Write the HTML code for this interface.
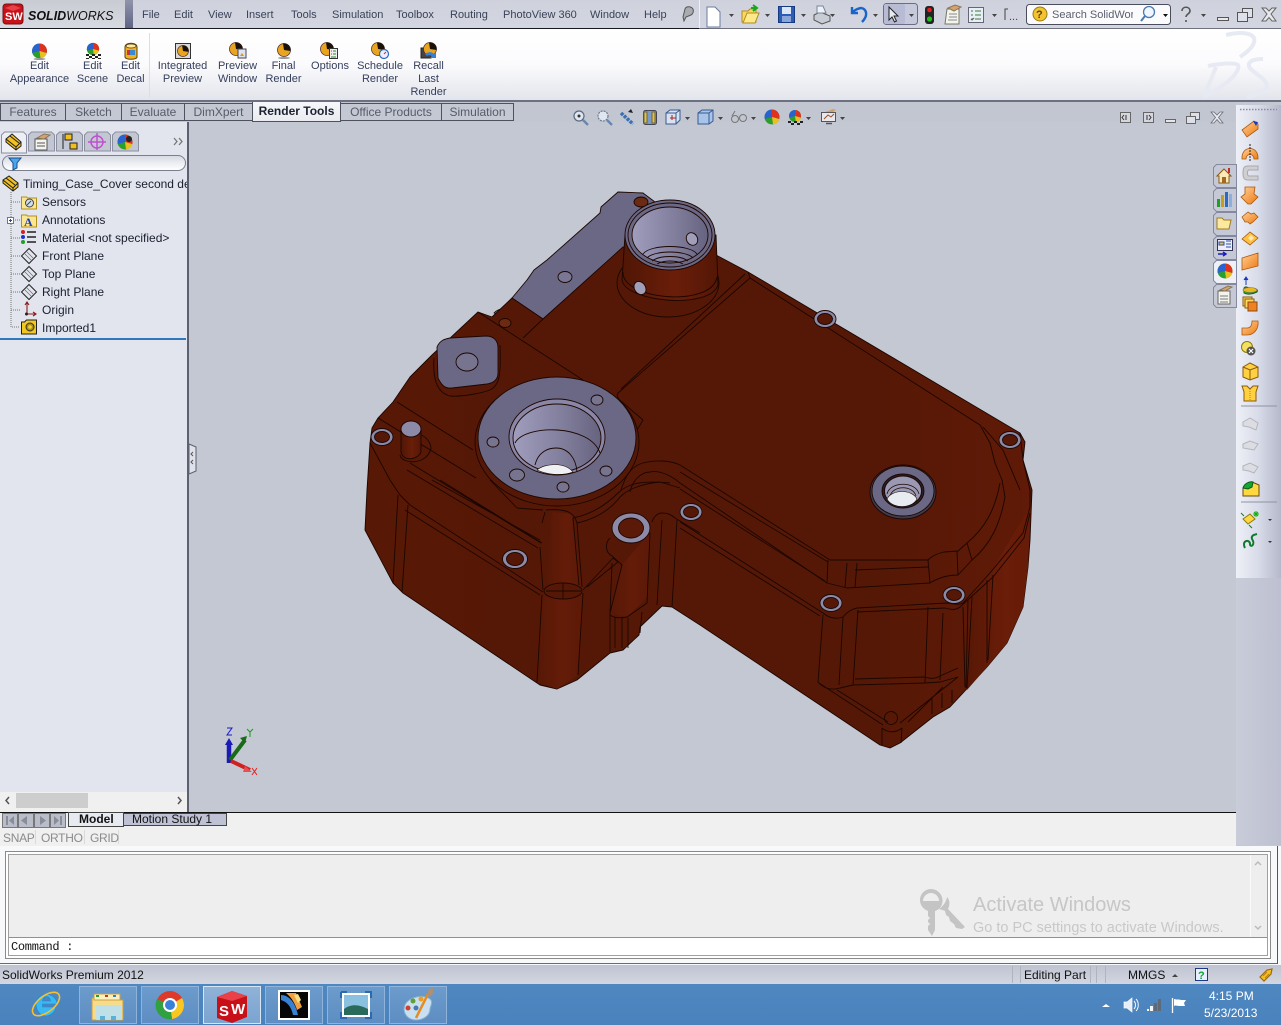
<!DOCTYPE html>
<html><head><meta charset="utf-8"><title>SolidWorks</title>
<style>
html,body{margin:0;padding:0;width:1281px;height:1025px;overflow:hidden;background:#c3c8d3;font-family:"Liberation Sans",sans-serif}
.a{position:absolute}
.t{position:absolute;white-space:nowrap;line-height:14px;font-size:11px;color:#3a4259}
.c{position:absolute;text-align:center;font-size:11px;line-height:13px;color:#353f5c;white-space:nowrap;transform:translateX(-50%)}
.tree{position:absolute;font-size:12px;line-height:16px;color:#1a1f2e;white-space:nowrap}
.tab{position:absolute;top:103px;height:18px;background:#c4c8d3;border:1px solid #4d5160;box-sizing:border-box;font-size:12px;line-height:16px;text-align:center;color:#565b6a}
.tb{position:absolute;top:986px;height:38px;width:58px;box-sizing:border-box;border:1px solid #8fb3d9;background:linear-gradient(#6c9bcc,#5d8dc2)}
</style></head><body>
<!-- base panels -->
<div class="a" style="left:0;top:0;width:1281px;height:28px;background:linear-gradient(#cfd2dd,#d3d6e0)"></div>
<div class="a" style="left:0;top:0;width:125px;height:28px;background:linear-gradient(#c9cbd3,#d8dae2)"></div>
<div class="a" style="left:125px;top:0;width:8px;height:28px;background:linear-gradient(#9094ab,#5f6486)"></div>
<div class="a" style="left:0;top:28px;width:699px;height:1px;background:#15181f"></div>
<div class="a" style="left:699px;top:28px;width:582px;height:1px;background:#6e7180"></div>
<div class="a" style="left:699px;top:0;width:1px;height:28px;background:#eef0f5"></div>
<div class="a" style="left:0;top:29px;width:1281px;height:71px;background:linear-gradient(#fff 0,#fbfbfd 50%,#e3e5ec 100%)"></div>
<div class="a" style="left:0;top:100px;width:1281px;height:2px;background:#6c7080"></div>
<div class="a" style="left:0;top:102px;width:1236px;height:22px;background:#c2c6d1"></div>
<div class="a" style="left:149px;top:33px;width:1px;height:64px;background:#dcdee5"></div>
<!-- viewport -->
<div class="a" style="left:189px;top:122px;width:1047px;height:690px;background:#c3c8d3"></div>
<!-- feature manager -->
<div class="a" style="left:0;top:122px;width:187px;height:690px;background:#e2e5ee"></div>
<div class="a" style="left:187px;top:122px;width:2px;height:690px;background:#5c6070"></div>
<div class="a" style="left:0;top:338px;width:186px;height:2px;background:#2d79bd"></div>
<div class="a" style="left:2px;top:155px;width:184px;height:16px;background:linear-gradient(#d8dbe4,#fff);border:1px solid #7a7f8e;border-radius:9px;box-sizing:border-box"></div>
<div class="a" style="left:0;top:792px;width:187px;height:20px;background:#f0f0f0"></div>
<div class="a" style="left:16px;top:793px;width:72px;height:15px;background:#cdcdcd"></div>
<!-- right panel -->
<div class="a" style="left:1236px;top:105px;width:45px;height:473px;background:linear-gradient(90deg,#eef0f8 0,#d8dbe8 50%,#b4b8ca 100%)"></div>
<div class="a" style="left:1236px;top:578px;width:45px;height:267px;background:linear-gradient(90deg,#c9ccd9,#bdc0d0)"></div>
<!-- bottom -->
<div class="a" style="left:0;top:812px;width:1236px;height:1px;background:#111"></div>
<div class="a" style="left:0;top:813px;width:1236px;height:33px;background:#f0f0f0"></div>
<div class="a" style="left:0;top:846px;width:1281px;height:119px;background:#f7f9fb"></div>
<div class="a" style="left:5px;top:851px;width:1266px;height:108px;box-sizing:border-box;border:1px solid #8a8a8a;background:#fff"></div>
<div class="a" style="left:8px;top:854px;width:1260px;height:102px;box-sizing:border-box;border:1px solid #a0a0a0;background:#eeeeee"></div>
<div class="a" style="left:9px;top:937px;width:1258px;height:18px;background:#fff;border-top:1px solid #909090;box-sizing:border-box"></div>
<div class="a" style="left:1250px;top:855px;width:1px;height:82px;background:#fafafa"></div>
<div class="a" style="left:0;top:963px;width:1278px;height:1px;background:#6a6a6a"></div>
<div class="a" style="left:1277px;top:846px;width:1px;height:118px;background:#555"></div>
<div class="a" style="left:0;top:965px;width:1281px;height:19px;background:linear-gradient(#bfc3d2,#d3d6e0)"></div>
<!-- taskbar -->
<div class="a" style="left:0;top:984px;width:1281px;height:41px;background:linear-gradient(#4f87c1,#4a82bd)"></div>
<div class="tb" style="left:79px"></div>
<div class="tb" style="left:141px"></div>
<div class="tb" style="left:203px;background:linear-gradient(#8fb2d8,#7ba4d0);border-color:#d6e5f4"></div>
<div class="tb" style="left:265px"></div>
<div class="tb" style="left:327px"></div>
<div class="tb" style="left:389px"></div>

<!-- tabs -->
<div class="tab" style="left:0;width:66px">Features</div>
<div class="tab" style="left:65px;width:57px">Sketch</div>
<div class="tab" style="left:121px;width:64px">Evaluate</div>
<div class="tab" style="left:184px;width:69px">DimXpert</div>
<div class="tab" style="left:252px;width:89px;top:102px;height:20px;background:linear-gradient(#f6f7fa,#e9ebf0);color:#1d2130;font-weight:bold;line-height:19px;border-top:none">Render Tools</div>
<div class="tab" style="left:340px;width:102px">Office Products</div>
<div class="tab" style="left:441px;width:73px">Simulation</div>

<!-- GRAPHICS -->
<svg class="a" style="left:0;top:0" width="1281" height="1025" viewBox="0 0 1281 1025" xmlns="http://www.w3.org/2000/svg">
<defs>
<linearGradient id="body" x1="0" x2="1" y1="0" y2="0"><stop offset="0" stop-color="#571806"/><stop offset=".75" stop-color="#551806"/><stop offset="1" stop-color="#601a07"/></linearGradient>
<linearGradient id="cyl" x1="0" x2="1"><stop offset="0" stop-color="#501605"/><stop offset=".55" stop-color="#6a1e09"/><stop offset="1" stop-color="#541706"/></linearGradient>
<linearGradient id="side" x1="0" x2="1"><stop offset="0" stop-color="#561806"/><stop offset=".55" stop-color="#641c08"/><stop offset="1" stop-color="#5c1907"/></linearGradient>
<linearGradient id="side2" x1="0" x2="1"><stop offset="0" stop-color="#571806"/><stop offset=".6" stop-color="#6a1d08"/><stop offset="1" stop-color="#661c08"/></linearGradient>
<linearGradient id="bore" x1="0" x2="1"><stop offset="0" stop-color="#a09dbd"/><stop offset=".6" stop-color="#7f7c9a"/><stop offset="1" stop-color="#66637f"/></linearGradient>
<linearGradient id="orng" x1="0" x2="1" y1="0" y2="1"><stop offset="0" stop-color="#ffd09a"/><stop offset="1" stop-color="#ee7a10"/></linearGradient>
<g id="pie"><circle cx="0" cy="0" r="7.5" fill="#2aa02a"/><path d="M0 0V-7.5A7.5 7.5 0 0 0-7.2 2Z" fill="#2a62d0"/><path d="M0 0V-7.5A7.500 7.500 0 0 1 7.200 2Z" fill="#e03020"/><path d="M0 0L7.200 2A7.500 7.500 0 0 1 1 7.400Z" fill="#eac020"/></g>
<g id="gball"><circle cx="0" cy="0" r="6.500" fill="#eaa520" stroke="#533" stroke-width=".8"/><path d="M-1-6.500A6.500 6.500 0 0 1 6.500 1L0 0Z" fill="#1a1208"/></g>
<g id="dn"><path d="M0 0h5l-2.500 3z" fill="#444"/></g>
<g id="plane"><path d="M-7.500 0L0-7.500 7.500 0 0 7.500Z" fill="none" stroke="#222"/><path d="M-3-5L5 3M-5-3L3 5" stroke="#666" stroke-width=".7"/></g>
<g id="dot"><path d="M0 0H9" stroke="#777" stroke-dasharray="1 1"/></g>
<g id="wash"><ellipse rx="11" ry="8.500" fill="#8d8aa8" stroke="#1a0a08" stroke-width=".9"/><ellipse rx="7.500" ry="5.500" fill="#561806" stroke="#1a0a08" stroke-width=".9"/></g>
</defs>

<!-- logo -->
<rect x="3" y="4" width="20" height="20" rx="3" fill="#c8121a" stroke="#7a0d12"/>
<path d="M5 8L13 5 21 8 13 11Z" fill="#e84048"/>
<text x="5" y="20" font-family="Liberation Sans" font-size="11" font-weight="bold" fill="#fff">SW</text>
<text x="28" y="20" font-family="Liberation Sans" font-size="12.500" font-style="italic" font-weight="bold" fill="#111">SOLID<tspan font-weight="normal">WORKS</tspan></text>

<!-- quick access toolbar -->
<path d="M683 17l2-8c1-3 6-3 8 0 1 2 0 5-2 6l-5 2-2 4z" fill="#a9abb0" stroke="#555"/>
<path d="M707 7h8l5 5v15h-13z" fill="#fff" stroke="#6a7da0"/>
<use href="#dn" x="729" y="14"/>
<path d="M742 11h6l2-2h6v13h-14z" fill="#f8d860" stroke="#b08a20"/><path d="M743 23l4-10h12l-4 10z" fill="#ffe98a" stroke="#b08a20"/><path d="M753 5l4 3-4 3M756 8h-5" stroke="#18a818" stroke-width="2" fill="none"/>
<use href="#dn" x="765" y="14"/>
<rect x="778.500" y="6.500" width="16" height="16" fill="#2c5cb8" stroke="#163a80"/><rect x="782" y="7" width="9" height="7" fill="#dde6f4"/><rect x="782" y="16" width="9" height="6" fill="#8aa6d8"/>
<use href="#dn" x="801" y="14"/>
<path d="M814 15l6-3 10 4v5l-8 3-8-4z" fill="#c8ccd4" stroke="#555"/><path d="M817 6h6l3 7h-9z" fill="#eef2f8" stroke="#789"/>
<use href="#dn" x="830" y="14"/>
<path d="M862 8c5 2 6 8 0 14M852 7v6h6M852 13c3-4 8-5 10-5" fill="none" stroke="#1a66c8" stroke-width="2.400"/>
<use href="#dn" x="873" y="14"/>
<rect x="883.500" y="3.500" width="34" height="21" rx="3" fill="#c6c9dc" stroke="#6a6d85"/><rect x="884" y="4" width="21" height="20" rx="2" fill="#b7bbd4"/><path d="M889 7v13l3-3 2.500 5 2-1-2.500-5h4z" fill="#e8ebf4" stroke="#222"/>
<use href="#dn" x="909" y="14"/>
<rect x="925" y="6" width="9" height="18" rx="3" fill="#222"/><circle cx="929.500" cy="10" r="2.300" fill="#e02020"/><circle cx="929.500" cy="19" r="2.600" fill="#20c020"/>
<path d="M947 9h12v15h-14z" fill="#f4f4ee" stroke="#776"/><path d="M948 8l7-3 6 2-7 4z" fill="#d8a070" stroke="#875"/><path d="M949 14h8M949 17h8M948 20h9" stroke="#888"/>
<rect x="968.500" y="7.500" width="15" height="15" fill="#e8eef6" stroke="#667"/><path d="M971 11h2M971 15h2M971 19l1 1 2-2M975 11h6M975 15h6M975 19h6" stroke="#3a7a3a"/>
<use href="#dn" x="992" y="14"/>
<path d="M1005 20V9h3" fill="none" stroke="#444"/><text x="1009" y="20" font-size="11" fill="#444" font-family="Liberation Sans">...</text>
<rect x="1026.500" y="4.500" width="144" height="20" rx="3" fill="#fbfbfd" stroke="#4a4d5c"/>
<circle cx="1040" cy="14" r="7" fill="#f3c430" stroke="#9a7a10"/><text x="1036" y="18" font-size="11" font-weight="bold" fill="#5a4010" font-family="Liberation Sans">?</text>
<circle cx="1149" cy="12" r="5.500" fill="#f0f6ff" stroke="#4a7ab0" stroke-width="1.300"/><path d="M1145 16l-4 5" stroke="#4a7ab0" stroke-width="2"/>
<path d="M1163 14h5l-2.500 3z" fill="#111"/>
<path d="M1182 11c0-5 8-5 8 0 0 3-4 3-4 6M1186 20v2" fill="none" stroke="#555" stroke-width="1.600"/>
<use href="#dn" x="1201" y="14"/>
<rect x="1217.500" y="17.500" width="11" height="3" fill="#e6e8ee" stroke="#555"/>
<rect x="1242.500" y="8.500" width="10" height="9" fill="#dfe1ea" stroke="#555"/><rect x="1237.500" y="12.500" width="10" height="9" fill="#dfe1ea" stroke="#555"/>
<path d="M1262 8h4l3 3 3-3h4l-5 6 5 7h-4l-3-3.500-3 3.500h-4l5-7z" fill="#e6e8ee" stroke="#666"/>
<!-- DS logo -->
<g fill="none" stroke="#e7eaf2" stroke-width="4"><path d="M1226 35c12-3 25-3 28 3 2 6-5 13-14 19"/><path d="M1204 97l12-30"/><path d="M1208 66c10-2 26-4 30-1 2 4-4 12-12 18-7 6-14 10-22 14"/><path d="M1263 59c-9 0-15 2-14 7 1 6 17 11 18 20 0 5-8 9-20 11"/></g>

<!-- ribbon icons -->
<use href="#pie" x="39.500" y="51"/><ellipse cx="39.500" cy="59" rx="6" ry="1" fill="#999"/>
<use href="#pie" transform="translate(93 49) scale(.82)"/>
<g fill="#222"><path d="M86 54h3v2h-3zM92 54h3v2h-3zM98 54h3v2h-3zM89 56h3v2h-3zM95 56h3v2h-3zM86 58h3v1h-3zM92 58h3v1h-3zM98 58h3v1h-3z"/></g>
<path d="M125 47c0-5 12-5 12 0v10c0 3-12 3-12 0z" fill="#f0b020" stroke="#5a4010"/><ellipse cx="131" cy="46" rx="5" ry="2" fill="#ffe9a0" stroke="#5a4010" stroke-width=".7"/><rect x="127" y="50" width="8" height="5" fill="#3a8ad0"/><rect x="127" y="50" width="3" height="5" fill="#d03030"/>
<rect x="175.500" y="43.500" width="15" height="15" fill="#dadada" stroke="#333"/><use href="#gball" transform="translate(183 51) scale(.85)"/>
<use href="#gball" x="236" y="49"/><rect x="238" y="49" width="8" height="9" fill="#dfe3ee" stroke="#445"/><path d="M240 56l2-3 2 3z" fill="#e09020"/>
<use href="#gball" x="284" y="50"/><ellipse cx="284" cy="58" rx="6" ry="1" fill="#999"/>
<use href="#gball" x="327" y="49" /><rect x="329.500" y="48.500" width="8" height="10" fill="#eee" stroke="#333"/><path d="M331 51h1M331 54h1M333 51h3M333 54h3M331 57h5" stroke="#2a8a2a"/>
<use href="#gball" x="378" y="49"/><circle cx="384" cy="54" r="4.500" fill="#eef" stroke="#2a6ac0" stroke-width="1.200"/><path d="M384 54l2-2" stroke="#c03030"/>
<rect x="421" y="48" width="10" height="10" fill="#444" stroke="#222"/><use href="#gball" x="430" y="49"/><path d="M425 54c4-3 7-2 9 0l2-2v6h-6l2-2c-2-1-4-1-5 0z" fill="#3a80d0"/>
<!-- heads up view toolbar -->
<circle cx="579" cy="116" r="5" fill="#dfe6f0" stroke="#5a6a80" stroke-width="1.200"/><circle cx="579" cy="116" r="1.500" fill="#333"/><path d="M583 120l5 5" stroke="#6a86b0" stroke-width="2.400"/>
<circle cx="603" cy="116" r="5" fill="#dfe6f0" stroke="#6a7a90" stroke-width="1.200" stroke-dasharray="2 1"/><path d="M607 120l5 5" stroke="#6a86b0" stroke-width="2.400"/>
<path d="M621 113l12 11" stroke="#3a70b0" stroke-width="3.500" stroke-dasharray="3 1"/><path d="M631 109l-3 3 5 1z" fill="#222"/>
<rect x="643.500" y="110.500" width="13" height="14" rx="2" fill="#7a9ac8" stroke="#445"/><path d="M644 112h3v11h-3zM652 112h3v11h-3z" fill="#e8c030" stroke="#665"/>
<path d="M666 113l4-3h10v10l-4 4h-10z" fill="#d8e2f2" stroke="#3a5a90"/><path d="M666 113h10v11M676 113l4-3" fill="none" stroke="#3a5a90"/><path d="M672 115v5M670 118h6" stroke="#b02020"/>
<use href="#dn" x="685" y="117"/>
<path d="M698 113l4-3h11v11l-4 3h-11z" fill="#a8c4e8" stroke="#3a5a90"/><path d="M698 113h11v11M709 113l4-3" fill="none" stroke="#3a5a90"/>
<use href="#dn" x="718" y="117"/>
<circle cx="735" cy="119" r="3.500" fill="none" stroke="#777"/><circle cx="743" cy="118" r="3.500" fill="none" stroke="#777"/><path d="M732 116l3-5" stroke="#777"/>
<use href="#dn" x="751" y="117"/>
<use href="#pie" x="772" y="117"/>
<use href="#pie" transform="translate(795 116) scale(.8)"/>
<g fill="#222"><path d="M788 121h3v2h-3zM794 121h3v2h-3zM800 121h3v2h-3zM791 123h3v2h-3zM797 123h3v2h-3z"/></g>
<use href="#dn" x="806" y="117"/>
<rect x="821.500" y="112.500" width="14" height="9" fill="#e8e8ee" stroke="#555"/><path d="M824 119l4-4 3 2 3-3" stroke="#a05020" fill="none"/><path d="M825 112l8-3 3 1-3 2z" fill="#d0a070"/><path d="M826 123.500h6" stroke="#555" stroke-width="1.500"/>
<use href="#dn" x="840" y="117"/>
<!-- viewport win controls -->
<rect x="1120.500" y="112.500" width="10" height="10" fill="#d4d7df" stroke="#666"/><path d="M1124 115l-2 2.500 2 2.500M1126 115v5" stroke="#333" fill="none"/>
<rect x="1143.500" y="112.500" width="10" height="10" fill="#d4d7df" stroke="#666"/><path d="M1149 115l2 2.500-2 2.500M1147 115v5" stroke="#333" fill="none"/>
<rect x="1165.500" y="119.500" width="10" height="3" fill="#e4e6ec" stroke="#666"/>
<rect x="1190.500" y="112.500" width="9" height="7" fill="#dde0e8" stroke="#666"/><rect x="1186.500" y="116.500" width="9" height="7" fill="#dde0e8" stroke="#666"/>
<path d="M1211 112h3l3 3 3-3h3l-4.500 5.500 4.500 5.500h-3l-3-3.500-3 3.500h-3l4.500-5.500z" fill="#e8eaef" stroke="#6a6d78" stroke-width=".8"/>

<!-- feature manager tabs -->
<g stroke="#8b8fa0" fill="#c3c7d3">
<path d="M1.500 153v-18l3-3h19l3 3v18z" fill="#edeff5"/>
<path d="M28.500 151v-16l3-3h20l3 3v16z"/>
<path d="M56.500 151v-16l3-3h20l3 3v16z"/>
<path d="M84.500 151v-16l3-3h20l3 3v16z"/>
<path d="M112.500 151v-16l3-3h20l3 3v16z"/></g>
<path d="M6 139l6-5 9 8v4l-5 4-10-8z" fill="#f2c020" stroke="#222"/><path d="M6 139l10 8v3M16 147l5-5M10 136l9 7" fill="none" stroke="#222"/>
<path d="M35 139h12v11h-12z" fill="#f4f4ee" stroke="#555"/><path d="M37 138l7-4 6 1-6 4z" fill="#d8a070" stroke="#875"/><path d="M37 143h8M37 146h8" stroke="#555"/>
<path d="M63 134v15" stroke="#222"/><rect x="65" y="134" width="7" height="6" fill="#f0c020" stroke="#222"/><rect x="70" y="143" width="7" height="6" fill="#f0c020" stroke="#222"/>
<circle cx="97" cy="142" r="6" fill="none" stroke="#c050d0" stroke-width="1.500"/><path d="M97 133v17M88 142h18" stroke="#c050d0" stroke-width="1.500"/>
<use href="#pie" x="125" y="142"/><circle cx="129" cy="139" r="3" fill="#222"/>
<path d="M174 138l3 3.500-3 3.500M179 138l3 3.500-3 3.500" fill="none" stroke="#777" stroke-width="1.300"/>
<path d="M9 158h12l-4 5v5l-4 2v-7z" fill="#4aa8e8" stroke="#1a4a90"/>
<!-- tree -->
<path d="M3 180l6-4 9 7v4l-5 4-10-8z" fill="#f2c020" stroke="#222"/><path d="M3 180l10 8v3M13 188l5-5M6 178l9 7" fill="none" stroke="#222"/>
<g><path d="M11 192V327H20" fill="none" stroke="#777" stroke-dasharray="1 1"/>
<use href="#dot" x="11" y="202"/><use href="#dot" x="15" y="220"/><use href="#dot" x="11" y="238"/><use href="#dot" x="11" y="256"/><use href="#dot" x="11" y="274"/><use href="#dot" x="11" y="292"/><use href="#dot" x="11" y="310"/></g>
<path d="M21.500 197h5l1 1h9v11h-15z" fill="#fbe690" stroke="#b09020"/><circle cx="29.500" cy="203" r="4" fill="#cfe0f4" stroke="#444"/><path d="M27 205l4-4" stroke="#444"/>
<rect x="7.500" y="217.500" width="6" height="6" fill="#fff" stroke="#777"/><path d="M9 220.500h3M10.500 219v3" stroke="#2a4a90"/>
<path d="M21.500 215h5l1 1h9v11h-15z" fill="#fbe690" stroke="#b09020"/><text x="24" y="226" font-family="Liberation Serif" font-size="12" font-weight="bold" fill="#1a3ac0">A</text>
<circle cx="23" cy="232" r="2" fill="#d02020"/><circle cx="23" cy="237" r="2" fill="#2030d0"/><circle cx="23" cy="242" r="2" fill="#20a020"/><path d="M27 232h9M27 237h9M27 242h9" stroke="#222" stroke-width="1.500"/>
<use href="#plane" x="29" y="256"/><use href="#plane" x="29" y="274"/><use href="#plane" x="29" y="292"/>
<path d="M27 303v11M27 314h8M25 305l2-3 2 3M33 312l3 2-3 2" fill="none" stroke="#8a1a1a" stroke-width="1.100"/><circle cx="26.500" cy="314" r="1.500" fill="#222"/>
<path d="M21.500 322h3l2-2h10v14h-15z" fill="#f0c820" stroke="#222"/><circle cx="30" cy="327" r="4" fill="#b09010" stroke="#332"/><circle cx="30" cy="327" r="1.800" fill="#f0d040"/>
<!-- collapse handle -->
<path d="M189 444l7 3v24l-7 3z" fill="#dfe2ea" stroke="#5c6070"/><path d="M193 452l-2 2 2 2M193 460l-2 2 2 2" stroke="#555" fill="none"/>
<path d="M9 797l-3 3.500 3 3.500M178 797l3 3.500-3 3.500" fill="none" stroke="#555" stroke-width="1.500"/>

<!-- task pane tabs -->
<g fill="#c5c9d6" stroke="#8589a0">
<path d="M1236.500 164.500h-20l-3 3v17l3 3h20z"/><path d="M1236.500 188.500h-20l-3 3v17l3 3h20z"/><path d="M1236.500 212.500h-20l-3 3v17l3 3h20z"/><path d="M1236.500 236.500h-20l-3 3v17l3 3h20z"/>
<path d="M1236.500 260.500h-20l-3 3v17l3 3h20z" fill="#eef0f6"/><path d="M1236.500 284.500h-20l-3 3v17l3 3h20z"/></g>
<path d="M1217 176l7-7 7 7h-2v7h-10v-7z" fill="#fbe9b8" stroke="#8a5a10"/><rect x="1222" y="177" width="4" height="6" fill="#a06a20"/><rect x="1228" y="168" width="2" height="5" fill="#c03020"/>
<rect x="1217" y="199" width="3" height="8" fill="#20a020"/><rect x="1221" y="195" width="3" height="12" fill="#c0a020"/><rect x="1225" y="192" width="3" height="15" fill="#2a6ac0"/><rect x="1229" y="194" width="3" height="13" fill="#8ab0e0"/>
<path d="M1217 218h5l2 2h7l-2 9h-12z" fill="#fbe9a0" stroke="#a07a20"/>
<rect x="1217.500" y="239.500" width="15" height="11" fill="#eef" stroke="#335"/><path d="M1219 242h5v3h-5zM1226 241h5M1226 244h5M1226 247h5" stroke="#2a50a0" fill="#e8c030"/><path d="M1218 254h7M1223 252l3 2-3 2" stroke="#1a1ac0" fill="none" stroke-width="1.400"/>
<use href="#pie" x="1225" y="271"/>
<path d="M1218 291h12v13h-12z" fill="#f4f4ee" stroke="#666"/><path d="M1220 290l8-4 4 1-7 4z" fill="#d8a070" stroke="#875"/><path d="M1220 296h8M1220 299h8M1220 302h8" stroke="#777"/>

<!-- right toolbar -->
<path d="M1240 109.500h37" stroke="#8a8da0" stroke-width="1.500" stroke-dasharray="1.500 1.500"/>
<g stroke="#a85a10" stroke-width=".8" fill="url(#orng)">
<path d="M1242 130l12-9 4 3 0 5-11 8z"/>
<path d="M1242 159c-1-14 17-14 16 0h-4c0-6-8-6-8 0z"/>
<path d="M1245 187h10l-1 7 4 3-7 7h-3l-7-7 4-3z"/>
<path d="M1242 217l6-5 3 2 3-1 4 4-5 5-3 2-2-2-3 0z"/>
<path d="M1242 239l8-7 8 6-8 7z" fill="#ffc040"/>
<path d="M1242 258l16-5v13l-16 4z"/>
<path d="M1242 328h5c3 0 5-2 5-7h6c1 8-4 14-11 14h-5z"/>
</g>
<path d="M1251 235l3 3-3 3-3-3z" fill="#ffe9b0"/>
<path d="M1258 166h-10c-4 0-5 2-5 7s1 7 5 7h10v-4h-9c-2 0-2-6 0-6h9z" fill="#cfcfd2" stroke="#a8a8ac"/>
<path d="M1250 144v17" stroke="#222" stroke-dasharray="2 1"/>
<path d="M1253 121l5 1-2 4z" fill="#1a3ac0"/>
<path d="M1244 288c2-3 4 1 10 1 3 0 4 1 3 3-4 2-10 3-13 1z" fill="#30b030" stroke="#1a601a"/><ellipse cx="1250" cy="290" rx="7" ry="2.500" fill="#e8b820" stroke="#665" stroke-width=".6"/><path d="M1246 285v-6M1244 280l2-3 2 3" stroke="#1a3ac0" fill="#1a3ac0"/>
<rect x="1243" y="297" width="9" height="9" fill="#ffd860" stroke="#8a5a10"/><rect x="1245" y="299" width="9" height="9" fill="#ffd860" stroke="#8a5a10"/><rect x="1248" y="302" width="9" height="9" fill="#f08020" stroke="#8a4a10"/>
<circle cx="1247" cy="347" r="5.500" fill="#f4e060" stroke="#8a7a10"/><circle cx="1251" cy="351" r="4.500" fill="#555"/><path d="M1249 349l4 4M1253 349l-4 4" stroke="#fff" stroke-width="1.200"/>
<path d="M1243 367l7-4 8 4v10l-8 3-7-3z" fill="#ffd040" stroke="#8a5a10"/><path d="M1243 367l7 3 8-3M1250 370v10" fill="none" stroke="#8a5a10"/>
<path d="M1242 386h5l3 3 3-3h5l-2 6v9h-12v-9z" fill="#ffd040" stroke="#8a5a10"/><path d="M1250 389v12" stroke="#c08010" stroke-dasharray="1 1"/>
<path d="M1241 406h36M1241 502h36" stroke="#8f92a4"/>
<g fill="#dcdde2" stroke="#b4b5bc"><path d="M1243 422l7-4 8 5-2 7-7-3-6-1z"/><path d="M1243 444l7-3 8 3-4 6-5-1-6-1z"/><path d="M1243 466l7-3 8 4-4 6-5-2-6-1z"/></g>
<path d="M1243 488l9-6 7 3v11h-16z" fill="#ffd840" stroke="#6a4a10"/><path d="M1243 488c1-4 6-7 10-6l-1 5-4 2z" fill="#10a830" stroke="#0a5a1a"/>
<path d="M1243 519l7-5 5 5-7 5z" fill="#ffd840" stroke="#8a7a10"/><path d="M1241 513l3 3M1249 525l3 3" stroke="#1a7a1a"/><path d="M1256 511v6M1253 514h6M1254 512l4 4M1258 512l-4 4" stroke="#10b010"/>
<path d="M1245 548c-4-8 5-9 5-4 0 4 6 1 2-5-1-3 1-4 5-5" fill="none" stroke="#107a30" stroke-width="2"/>
<path d="M1268 519h4l-2 2zM1268 541h4l-2 2z" fill="#333"/>

<!-- MODEL -->
<g stroke="#1c0600" stroke-width=".9" stroke-linejoin="round">
<path d="M512 298L527 280 534 270 547 260 600 213 601 207 618 192 643 193 655 202 680 230 623 248 543 319Z" fill="#6b6885"/>
<path d="M510 318L494 313A14 10 0 0 1 519 325L517 335Z" fill="#8d8aa8"/>
<path d="M478 312L492 317 512 298 543 319 623 247 716 255 748 272 1020 433 1025 442 1023 460 1032 490 1030 540 1028 567 1023 607 1007 643 987 667 963 693 950 707 933 717 900 743 890 748 880 745 700 625 672 607 662 606 640 627 639 635 623 650 610 653 577 680 557 689 540 685 403 593 393 583 365 530 367 490 370 443 372 428 378 418 393 402 410 377 432 355Z" fill="url(#body)"/>
<!-- shaded faces -->
<path d="M1030 507L1028 567 1023 607 1007 643 987 667 967 690 972 597 990 573Z" fill="url(#side2)" stroke="none"/>
<path d="M543 595C550 600 578 600 583 593L578 675 557 689 537 682Z" fill="url(#side)" stroke="none"/>
<path d="M552 512L572 514 582 587C570 582 555 582 546 590Z" fill="url(#side)" stroke="none"/>
<path d="M622 565L650 533 647 597 627 617 610 613Z" fill="url(#side)" stroke="none"/>
<g fill="none">
<!-- top plate seams -->
<path d="M748 272L750 278 618 393C616 396 618 399 622 402L643 420 637 430"/>
<path d="M745 274L621 389"/>
<path d="M523 338L543 319M478 312L583 380"/>
<path d="M397 402L473 450M378 418L476 478M370 443L390 480"/>
<!-- channel strips -->
<path d="M410 463L541 543M407 470L538 548M432 480L540 540M440 480L542 543"/>
<!-- rim -->
<path d="M750 278L980 425 990 443 995 463 1002 480 1005 497"/>
<path d="M1000 483C995 510 985 528 967 543L958 551 944 552C936 554 932 556 928 560L830 560 680 465C670 460 655 460 643 463 632 466 626 474 621 490"/>
<path d="M1005 497C1000 525 990 545 972 560L958 575C948 575 938 578 930 583L847 588 827 583 680 483C672 476 660 470 650 472 640 472 632 482 630 492"/>
<path d="M680 472L828 562M680 489L825 581"/>
<path d="M828 560L827 583M847 563L845 587M857 563L855 587M928 560L930 583M855 570L928 567M957 551L958 575M967 543L972 560"/>
<path d="M1020 433L1023 460 1030 490 1030 507M983 427L1003 450 1020 490"/>
<!-- outer lip -->
<path d="M680 522L823 613C830 619 838 619 843 617 847 612 852 609 857 608L947 603C955 604 960 605 963 603L990 573 1023 533 1030 507"/>
<path d="M680 528L820 616M857 612L945 608C952 610 956 610 960 607L993 577 1024 538 1030 513"/>
<!-- box -->
<path d="M823 615L818 682M843 617L839 685M858 610L853 685M928 607L925 683M943 613L940 680M963 607L965 687M972 597L967 688M987 580L987 663M993 575L988 660M968 600L966 688"/>
<path d="M855 679L925 677C930 679 935 679 940 676L958 668M818 682C825 690 833 690 840 688L853 685 925 683 940 682 958 677"/>
<path d="M819 683L883 725M837 690L888 722M958 677L900 723M943 687L908 722"/>
<path d="M882 728L882 745M902 728L901 743M882 728C888 733 896 733 902 728"/>
<path d="M932 697V714M942 693V708M952 690V703"/>
<circle cx="891" cy="718" r="6.500"/>
<!-- left side -->
<path d="M398 495L393 583M408 505L402 592M390 480L400 495 410 505 543 592M405 510L540 595"/>
<path d="M490 480L517 508 543 510M542 523L545 512M540 547L543 590M546 510C556 509 566 510 570 513 575 516 576 520 577 523L582 587M573 518L579 585"/>
<ellipse cx="563" cy="591" rx="19" ry="8"/>
<path d="M546 591H581M563 583V599"/>
<path d="M542 595L537 682M583 593L578 675"/>
<path d="M583 590L613 558 618 562 587 587"/>
<path d="M610 538C604 544 606 553 612 556L622 565 610 613V652M612 563L610 613"/>
<path d="M610 615C615 619 622 618 627 617L647 603 650 533M642 612L640 633M615 617V648M622 617V648M628 618V648"/>
<path d="M662 520L657 605M677 520L672 607"/>
<path d="M652 522C654 516 658 513 662 513 668 513 672 515 675 518L700 533"/>
<path d="M577 523C595 519 610 510 620 497 628 489 640 484 660 482L680 488"/>
<path d="M573 518C593 514 608 503 618 493 627 484 640 480 670 483"/>
</g>
<!-- cylinder -->
<ellipse cx="668" cy="283" rx="51" ry="34" fill="none"/>
<path d="M625 235L622 280C625 302 710 310 718 285L716 235Z" fill="url(#cyl)"/>
<path d="M623 272C622 300 712 308 717 277" fill="none"/>
<ellipse cx="670" cy="235" rx="45" ry="35" fill="#6b6885"/>
<ellipse cx="670" cy="235" rx="42" ry="32" fill="none"/>
<ellipse cx="670" cy="235" rx="38" ry="28" fill="url(#bore)"/>
<path d="M643 254C650 244 690 244 697 254M647 258C654 250 686 250 693 258M652 261C660 255 680 255 688 261M657 264C664 260 676 260 683 264" fill="none"/>
<ellipse cx="692" cy="239" rx="5.500" ry="6.500" fill="#a09eb8" transform="rotate(-30 692 239)"/>
<ellipse cx="640" cy="288" rx="5.500" ry="7" fill="#a09eb8" transform="rotate(-35 640 288)"/>
<ellipse cx="641" cy="202" rx="7" ry="5" fill="#6b2a12"/>
<ellipse cx="565" cy="277" rx="7" ry="5.500" fill="#7a7794"/>
<ellipse cx="505" cy="323" rx="6" ry="4.500" fill="#6b2a12"/>
<!-- square pad -->
<path d="M434 358C433 372 434 392 450 396 462 397 482 393 490 390 500 385 501 375 500 345" fill="none"/>
<path d="M437 347C440 340 445 339 450 338L486 336C495 336 498 342 498 348L498 373C498 380 493 383 487 384L452 388C444 389 441 384 438 378Z" fill="#6b6885"/>
<ellipse cx="467" cy="362" rx="11" ry="9" fill="#77748f"/>
<!-- big flange -->
<ellipse cx="557" cy="442" rx="82" ry="64" fill="none"/>
<ellipse cx="557" cy="438" rx="79" ry="61" fill="#6b6885"/>
<ellipse cx="557" cy="437" rx="48" ry="38" fill="#8a87a6"/>
<ellipse cx="557" cy="438" rx="44" ry="34" fill="url(#bore)"/>
<path d="M515 443C525 424 590 424 600 453" fill="none"/>
<path d="M535 465C538 452 548 448 556 448 568 448 576 458 577 472" fill="none"/>
<path d="M537 470C545 463 565 462 573 472 562 476 548 475 537 470Z" fill="#eef0f4" stroke-width=".6"/>
<ellipse cx="493" cy="442" rx="6" ry="5" fill="#77748f"/>
<ellipse cx="597" cy="400" rx="6" ry="5" fill="#77748f"/>
<ellipse cx="606" cy="471" rx="6" ry="5" fill="#77748f"/>
<ellipse cx="563" cy="487" rx="6" ry="5" fill="#77748f"/>
<ellipse cx="517" cy="475" rx="7.500" ry="6" fill="#77748f"/>
<!-- pin -->
<path d="M401 429V452C403 462 418 460 421 452V429Z" fill="url(#cyl)"/>
<path d="M400 455C402 465 428 465 431 448 430 440 424 436 421 435" fill="none"/>
<ellipse cx="411" cy="429" rx="10" ry="8" fill="#8d8aa8"/>
<!-- washers -->
<use href="#wash" x="382" y="437"/>
<ellipse cx="515" cy="559" rx="12.500" ry="9.500" fill="#8d8aa8"/><ellipse cx="515" cy="559" rx="8.500" ry="6.500" fill="#561806"/>
<ellipse cx="631" cy="528" rx="19" ry="15" fill="#8d8aa8"/><ellipse cx="631" cy="528" rx="12.500" ry="10" fill="#5a1a07"/>
<use href="#wash" x="691" y="512"/>
<use href="#wash" x="825" y="319"/>
<use href="#wash" x="1010" y="440"/>
<use href="#wash" x="954" y="595"/>
<use href="#wash" x="831" y="603"/>
<!-- right boss -->
<ellipse cx="903" cy="492" rx="33" ry="27" fill="#3f3a4a"/>
<ellipse cx="903" cy="491" rx="31" ry="25" fill="#6b6885"/>
<ellipse cx="903" cy="491" rx="21" ry="17" fill="#26202a"/>
<ellipse cx="903" cy="491" rx="18.500" ry="15" fill="#9a98b2"/>
<path d="M887 494C890 481 916 481 919 494M890 496C893 485 913 485 916 496" fill="none" stroke-width=".7"/>
<path d="M887 499C892 489 912 489 917 499 912 509 892 509 887 499Z" fill="#e8ecf0" stroke-width=".6"/>
</g>

<!-- triad -->
<path d="M229 763L229 742" stroke="#1a1ab8" stroke-width="4.500"/><path d="M225 745l4-7 4 7z" fill="#1a1ab8"/>
<path d="M230 760L245 740" stroke="#1a6a1a" stroke-width="4"/><path d="M240 738l7-2-2 7z" fill="#1a6a1a"/>
<path d="M231 761L250 770" stroke="#d02020" stroke-width="4"/><path d="M245 766l7 6-9 0z" fill="#e85050"/>
<path d="M227 728h5l-5 7h5" fill="none" stroke="#1a1ad0"/>
<path d="M247 729l3 3 3-3M250 732v5" fill="none" stroke="#1a9a1a"/>
<path d="M252 768l5 7M257 768l-5 7" stroke="#e02020"/>

<!-- nav buttons -->
<g fill="#b9bdc9" stroke="#777"><rect x="2.500" y="813.500" width="15" height="14"/><rect x="18.500" y="813.500" width="15" height="14"/><rect x="34.500" y="813.500" width="15" height="14"/><rect x="50.500" y="813.500" width="15" height="14"/></g>
<g fill="#8a8d99"><path d="M6 816h2v9h-2zM14 816v9l-5-4.500zM27 816v9l-6-4.500zM40 816v9l6-4.500zM54 816v9l5-4.500zM60 816h2v9h-2z"/></g>
<path d="M68.500 812.500H123.500V826.500H68.500Z" fill="#e8eaf2" stroke="#444"/>
<path d="M123.500 813.500H226.500V825.500H123.500Z" fill="#bfc2d4" stroke="#444"/>
<path d="M35.500 830v14M84.500 830v14M118.500 830v14" stroke="#dadada"/>
<path d="M1255 865l3-3 3 3M1255 926l3 3 3-3" fill="none" stroke="#bbb" stroke-width="1.500"/>
<!-- watermark key -->
<g fill="#c4c4c4"><path d="M931 889a11.500 11.500 0 0 1 11 15c-1 4-4 6-7 7v19l-3 6-4-6v-4l2-2-2-2v-2l2-2-2-2v-5c-5-2-8-6-8-11 0-6 5-11 11-11zM923 901h16a8 8 0 0 0-16 0z"/><path d="M947 897c3 3 3 8 1 12l17 18-3 2-6-1-2-4-4-3-1-4-3-2-1-4c-2-1-3-1-6-2 3-2 7-6 8-12z"/></g>
<!-- status bar -->
<path d="M1012.500 966v17M1020.500 966v17M1090.500 966v17M1096.500 966v17M1105.500 966v17" stroke="#b0b3c0"/>
<path d="M1172 977l3-3 3 3z" fill="#444"/>
<rect x="1195.500" y="968.500" width="12" height="12" fill="#e8f0ff" stroke="#1a3a8a"/><text x="1198" y="979" font-size="11" font-weight="bold" fill="#10a030" font-family="Liberation Sans">?</text>
<path d="M1260 977l7-7 5-1-1 5-7 7z" fill="#f4c020" stroke="#9a6a10" stroke-width="1.200"/><path d="M1263 976l4-4M1265 978l4-4" stroke="#c08010"/>
<!-- taskbar icons -->
<path d="M36 1004a10.500 9.500 0 0 1 21 0H42.500v3H56c-1 5-5 9-10 9-6 0-10-6-10-12zM42.500 1001h8c-.5-3-2-4.500-4-4.500s-3.500 1.500-4 4.500z" fill="#3ab8f2" fill-rule="evenodd" stroke="#1c86d0" stroke-width=".6"/>
<ellipse cx="46" cy="1004" rx="16" ry="8" fill="none" stroke="#f6c030" stroke-width="1.600" transform="rotate(-38 46 1004)"/>
<path d="M92 998h8l3 2h20v20h-31z" fill="#f6dc8a" stroke="#c8a040"/><path d="M94 994h26v6h-26z" fill="#fbf0c0" stroke="#c8a040"/><path d="M96 1005h26v15h-26z" fill="#b8e0f0" fill-opacity=".9"/><path d="M100 1016h5v4h-5zM111 1016h5v4h-5z" fill="#5ab0d8"/><path d="M96 995h3v2h-3z" fill="#2aa02a"/><path d="M105 995h3v2h-3z" fill="#d03030"/><path d="M113 995h3v2h-3z" fill="#3080d0"/>
<circle cx="170" cy="1005" r="14" fill="#dd3a2a"/><path d="M170 1005L182 998A14 14 0 0 1 172 1019Z" fill="#f8c820"/><path d="M170 1005L172 1019A14 14 0 0 1 157 999Z" fill="#30a040"/><circle cx="170" cy="1005" r="7" fill="#fff"/><circle cx="170" cy="1005" r="5" fill="#3a80d8"/>
<path d="M217 997l15-6 15 5v21l-15 6-15-5z" fill="#c81018"/><path d="M232 991l15 5-15 5-15-4z" fill="#ea4048"/>
<text x="219" y="1016" font-family="Liberation Sans" font-size="15" font-weight="bold" fill="#fff">S</text><text x="231" y="1014" font-family="Liberation Sans" font-size="15" font-weight="bold" fill="#fff">W</text>
<rect x="278" y="990" width="32" height="30" fill="#fff"/><rect x="280" y="992" width="28" height="26" fill="#060606"/>
<path d="M281 995c7 0 14 6 17 20l-5 0c-2-9-6-13-12-15z" fill="#3a80d0"/><path d="M286 993h10l6 14-5 3c-2-7-6-13-11-17z" fill="#f0a040"/><path d="M294 995l4-1 3 6-3 3z" fill="#f8e080"/>
<rect x="342" y="993" width="28" height="24" fill="#fff"/><rect x="344" y="995" width="24" height="20" fill="#8ac0e0"/><path d="M344 1009c8-6 16-4 24 0v6h-24z" fill="#2a6a5a"/><path d="M341 992h6M341 992v6M365 992h6v6M341 1012v6h6M371 1012v6h-6" stroke="#2a6ab0" stroke-width="2" fill="none"/>
<path d="M405 1005c3-8 20-12 26-5 2 4-1 6-1 9 0 6-6 11-14 11-9 0-14-8-11-15z" fill="#c8e0f0" stroke="#88b0d0"/>
<circle cx="408" cy="1008" r="2.500" fill="#d04030"/><circle cx="413" cy="1001" r="2.500" fill="#60a030"/><circle cx="421" cy="999" r="2.500" fill="#e8a020"/><circle cx="416" cy="1008" r="2.500" fill="#4a78b0"/>
<path d="M416 1018l12-24" stroke="#e88a20" stroke-width="2.500"/><path d="M427 994l2-5 4-1 0 5-3 4z" fill="#b09070"/>
<!-- tray -->
<path d="M1102 1007l4-3 4 3z" fill="#fff"/>
<path d="M1124 1002h3l5-4v14l-5-4h-3z" fill="#e8eef6" stroke="#f4f8fc" stroke-width=".7"/><path d="M1134 1001c2 2 2 6 0 8M1136 999c3 3 3 9 0 12" stroke="#f4f8fc" fill="none"/>
<path d="M1147 1009h2v2h-2zM1150 1006h3v5h-3z" fill="#f4f6f8"/><path d="M1154 1003h3v8h-3zM1158 999h3v12h-3z" fill="#5c6a7a"/>
<path d="M1172.500 998v15" stroke="#fff" stroke-width="1.300"/><path d="M1174 999c4 1 5 0 7 1l5 0-2 3 1 3-6 0c-2 0-3-1-5 0z" fill="#fff"/>
</svg>

<!-- TEXT -->
<span class="t" style="left:142px;top:8px">File</span>
<span class="t" style="left:174px;top:8px">Edit</span>
<span class="t" style="left:208px;top:8px">View</span>
<span class="t" style="left:246px;top:8px">Insert</span>
<span class="t" style="left:291px;top:8px">Tools</span>
<span class="t" style="left:332px;top:8px">Simulation</span>
<span class="t" style="left:396px;top:8px">Toolbox</span>
<span class="t" style="left:450px;top:8px">Routing</span>
<span class="t" style="left:503px;top:8px">PhotoView 360</span>
<span class="t" style="left:590px;top:8px">Window</span>
<span class="t" style="left:644px;top:8px">Help</span>
<span class="t" style="left:1052px;top:8px;width:81px;overflow:hidden;color:#5a5f6c">Search SolidWorks Help</span>

<div class="c" style="left:39.500px;top:60px">Edit<br>Appearance</div>
<div class="c" style="left:92.500px;top:60px">Edit<br>Scene</div>
<div class="c" style="left:130.500px;top:60px">Edit<br>Decal</div>
<div class="c" style="left:182.500px;top:60px">Integrated<br>Preview</div>
<div class="c" style="left:237.500px;top:60px">Preview<br>Window</div>
<div class="c" style="left:283.500px;top:60px">Final<br>Render</div>
<div class="c" style="left:330px;top:60px">Options</div>
<div class="c" style="left:380px;top:60px">Schedule<br>Render</div>
<div class="c" style="left:428.500px;top:60px">Recall<br>Last<br>Render</div>

<div class="tree" style="left:23px;top:176px;width:164px;overflow:hidden">Timing_Case_Cover second design</div>
<div class="tree" style="left:42px;top:194px">Sensors</div>
<div class="tree" style="left:42px;top:212px">Annotations</div>
<div class="tree" style="left:42px;top:230px">Material &lt;not specified&gt;</div>
<div class="tree" style="left:42px;top:248px">Front Plane</div>
<div class="tree" style="left:42px;top:266px">Top Plane</div>
<div class="tree" style="left:42px;top:284px">Right Plane</div>
<div class="tree" style="left:42px;top:302px">Origin</div>
<div class="tree" style="left:42px;top:320px">Imported1</div>

<span class="t" style="left:79px;top:812px;font-size:12px;font-weight:bold;color:#111">Model</span>
<span class="t" style="left:132px;top:812px;font-size:12px;color:#111">Motion Study 1</span>
<span class="t" style="left:3px;top:831px;font-size:12px;color:#8b8b8b;letter-spacing:-.3px">SNAP</span>
<span class="t" style="left:41px;top:831px;font-size:12px;color:#8b8b8b;letter-spacing:-.3px">ORTHO</span>
<span class="t" style="left:90px;top:831px;font-size:12px;color:#8b8b8b;letter-spacing:-.3px">GRID</span>
<span class="t" style="left:11px;top:940px;font-family:'Liberation Mono',monospace;font-size:12px;color:#111;letter-spacing:-.3px">Command :</span>
<span class="t" style="left:973px;top:893px;font-size:20px;line-height:24px;color:#c6c6c6">Activate Windows</span>
<span class="t" style="left:973px;top:919px;font-size:14.500px;line-height:18px;color:#c8c8c8">Go to PC settings to activate Windows.</span>
<span class="t" style="left:2px;top:968px;font-size:12px;color:#111">SolidWorks Premium 2012</span>
<span class="t" style="left:1024px;top:968px;font-size:12px;color:#111">Editing Part</span>
<span class="t" style="left:1128px;top:968px;font-size:12px;color:#111">MMGS</span>
<span class="t" style="left:1209px;top:989px;font-size:12px;color:#fff">4:15 PM</span>
<span class="t" style="left:1204px;top:1006px;font-size:12px;color:#fff">5/23/2013</span>
</body></html>
